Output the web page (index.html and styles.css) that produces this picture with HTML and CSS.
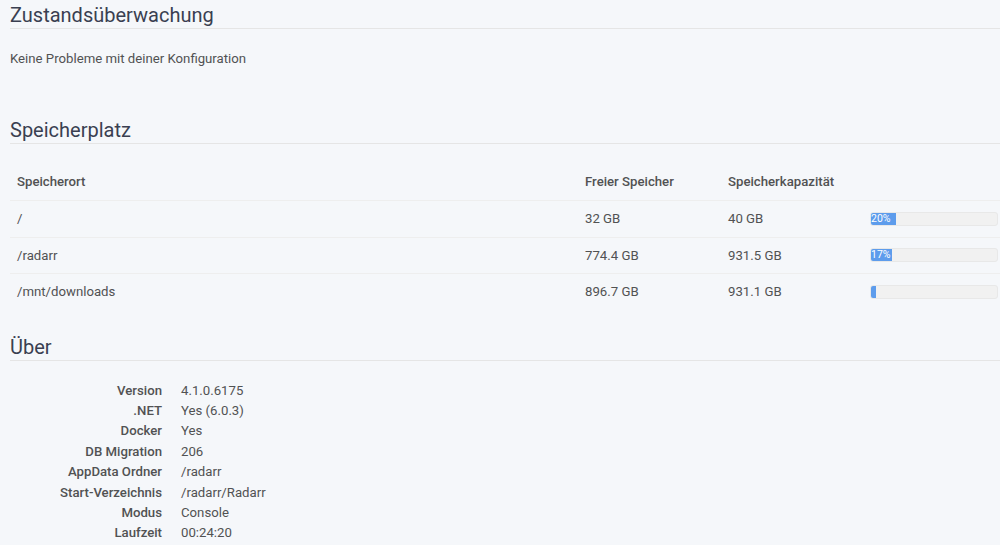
FILE: index.html
```html
<!DOCTYPE html>
<html lang="de">
<head>
  <meta charset="UTF-8" />
  <title>System Status | Radarr</title>
  <meta name="viewport" content="width=device-width, initial-scale=1.0" />
  <link rel="stylesheet" href="styles.css">
</head>
<body>

  <section class="section">
    <h2 class="legend">Zustandsüberwachung</h2>
    <p class="health-ok">Keine Probleme mit deiner Konfiguration</p>
  </section>

  <section class="section">
    <h2 class="legend">Speicherplatz</h2>
    <table class="disk-table">
      <thead>
        <tr>
          <th class="col-location">Speicherort</th>
          <th class="col-free">Freier Speicher</th>
          <th class="col-total">Speicherkapazität</th>
          <th class="col-bar"></th>
        </tr>
      </thead>
      <tbody>
        <tr>
          <td>/</td>
          <td>32 GB</td>
          <td>40 GB</td>
          <td><div class="progress"><div class="progress-fill" style="width: 20%">20%</div></div></td>
        </tr>
        <tr>
          <td>/radarr</td>
          <td>774.4 GB</td>
          <td>931.5 GB</td>
          <td><div class="progress"><div class="progress-fill" style="width: 17%">17%</div></div></td>
        </tr>
        <tr>
          <td>/mnt/downloads</td>
          <td>896.7 GB</td>
          <td>931.1 GB</td>
          <td><div class="progress"><div class="progress-fill" style="width: 4%"></div></div></td>
        </tr>
      </tbody>
    </table>
  </section>

  <section class="section about-section">
    <h2 class="legend">Über</h2>
    <dl class="about">
      <dt>Version</dt><dd>4.1.0.6175</dd>
      <dt>.NET</dt><dd>Yes (6.0.3)</dd>
      <dt>Docker</dt><dd>Yes</dd>
      <dt>DB Migration</dt><dd>206</dd>
      <dt>AppData Ordner</dt><dd>/radarr</dd>
      <dt>Start-Verzeichnis</dt><dd>/radarr/Radarr</dd>
      <dt>Modus</dt><dd>Console</dd>
      <dt>Laufzeit</dt><dd>00:24:20</dd>
    </dl>
  </section>

</body>
</html>
```

FILE: styles.css
```css
body {
  font-family: Roboto, 'Open Sans', sans-serif;
  font-size: 13.2px;
  background-color: #f5f7fa;
  color: #515253;
  margin: 0;
  padding: 0 0 0 10px;
}

.legend {
  font-size: 20px;
  font-weight: 400;
  color: #3a3f51;
  margin: 0;
  padding-top: 3px;
  height: 25px;
  line-height: 24px;
  border-bottom: 1px solid #e5e5e5;
}

.health-ok {
  margin: 0;
  padding-top: 21px;
  line-height: 18px;
  height: 65px;
}

.disk-table {
  width: 100%;
  border-collapse: collapse;
  margin-top: 18px;
}

.disk-table th {
  text-align: left;
  font-weight: 500;
  height: 38px;
  padding: 0 7px;
  border-bottom: 1px solid #eeeeee;
}

.disk-table td {
  height: 35.5px;
  padding: 0 7px;
  border-bottom: 1px solid #eeeeee;
}

.disk-table tbody tr:last-child td {
  border-bottom: none;
}

.col-free { width: 129px; }
.col-total { width: 128px; }
.col-bar { width: 128px; }

.disk-table td:last-child,
.disk-table th:last-child {
  padding-right: 2px;
}

.progress {
  height: 14px;
  background: #f1f1f1;
  border: 1px solid #e8e8e8;
  border-radius: 3px;
  overflow: hidden;
  box-sizing: border-box;
}

.progress-fill {
  height: 100%;
  background: #5d9cec;
  color: #fff;
  font-size: 10.5px;
  line-height: 12px;
  white-space: nowrap;
  overflow: hidden;
}

.about-section {
  margin-top: 22px;
}

.about {
  display: grid;
  grid-template-columns: 152px auto;
  column-gap: 19px;
  margin: 20px 0 0;
  line-height: 20.4px;
}

.about dt {
  text-align: right;
  font-weight: 500;
}

.about dd {
  margin: 0;
}
```
